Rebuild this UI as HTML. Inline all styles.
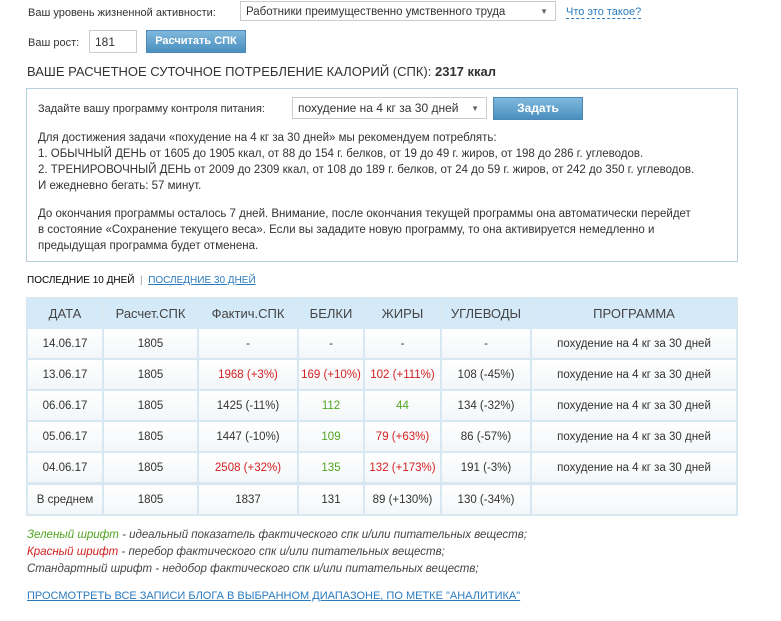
<!DOCTYPE html>
<html><head><meta charset="utf-8"><style>
body{margin:0;background:#fff;font-family:"Liberation Sans","DejaVu Sans",sans-serif;font-size:12px;color:#333;width:781px;height:621px;overflow:hidden;position:relative}
.a{position:absolute;white-space:nowrap}
.sel{position:absolute;border:1px solid #ccc;background:#fff;height:20px;line-height:20px;padding-left:5px;box-sizing:border-box}
.dd:after{content:"▼";position:absolute;right:7px;font-size:8px;color:#666}
.btn{position:absolute;background:linear-gradient(#7fb8dc,#4a8fc0);color:#fff;font-weight:bold;text-align:center;border:1px solid #4b88b5;box-sizing:border-box}
table{position:absolute;left:26px;top:297px;width:712px;border-collapse:collapse;font-size:11.5px;table-layout:fixed}
td,th{border:2px solid #d8e8f3;text-align:center;height:29px;padding:0;font-weight:normal;white-space:nowrap}
th{background:#d5eaf8;font-size:13px;color:#444;height:28px}
td{background:linear-gradient(#fff,#f3f6f8)}
.r{color:#d42020}.g{color:#4fa520}
a{color:#2b7bc0}
</style></head><body>
<div class="a" style="left:28px;top:7px;font-size:11px">Ваш уровень жизненной активности:</div>
<div class="sel dd" style="left:240px;top:1px;width:316px;font-size:11.5px">Работники преимущественно умственного труда</div>
<div class="a" style="left:566px;top:6px;color:#2b7bc0;border-bottom:1px dashed #2b7bc0;font-size:11px">Что это такое?</div>
<div class="a" style="left:28px;top:37px;font-size:11px">Ваш рост:</div>
<div class="sel" style="left:89px;top:30px;width:48px;height:23px;line-height:22px">181</div>
<div class="btn" style="left:146px;top:30px;width:100px;height:23px;line-height:21px;font-size:11px">Расчитать СПК</div>
<div class="a" style="left:27px;top:64px;font-size:13px">ВАШЕ РАСЧЕТНОЕ СУТОЧНОЕ ПОТРЕБЛЕНИЕ КАЛОРИЙ (СПК): <b>2317 ккал</b></div>
<div style="position:absolute;left:26px;top:88px;width:712px;height:174px;border:1px solid #b5cfe0;box-sizing:border-box"></div>
<div class="a" style="left:38px;top:103px;font-size:11px">Задайте вашу программу контроля питания:</div>
<div class="sel dd" style="left:292px;top:97px;width:195px;height:22px;line-height:21px">похудение на 4 кг за 30 дней</div>
<div class="btn" style="left:493px;top:97px;width:90px;height:23px;line-height:21px">Задать</div>
<div class="a" style="left:38px;top:130px;line-height:16px;font-size:11.5px">Для достижения задачи «похудение на 4 кг за 30 дней» мы рекомендуем потреблять:<br>1. ОБЫЧНЫЙ ДЕНЬ от 1605 до 1905 ккал, от 88 до 154 г. белков, от 19 до 49 г. жиров, от 198 до 286 г. углеводов.<br>2. ТРЕНИРОВОЧНЫЙ ДЕНЬ от 2009 до 2309 ккал, от 108 до 189 г. белков, от 24 до 59 г. жиров, от 242 до 350 г. углеводов.<br>И ежедневно бегать: 57 минут.</div>
<div class="a" style="left:38px;top:206px;line-height:16px;font-size:11.5px">До окончания программы осталось 7 дней. Внимание, после окончания текущей программы она автоматически перейдет<br>в состояние «Сохранение текущего веса». Если вы зададите новую программу, то она активируется немедленно и<br>предыдущая программа будет отменена.</div>
<div class="a" style="left:27px;top:275px;font-size:10px;color:#000">ПОСЛЕДНИЕ 10 ДНЕЙ <span style="color:#999">&nbsp;|&nbsp;</span> <a style="text-decoration:underline">ПОСЛЕДНИЕ 30 ДНЕЙ</a></div>
<table>
<colgroup><col style="width:76px"><col style="width:95px"><col style="width:100px"><col style="width:66px"><col style="width:77px"><col style="width:90px"><col></colgroup>
<tr><th>ДАТА</th><th>Расчет.СПК</th><th>Фактич.СПК</th><th>БЕЛКИ</th><th>ЖИРЫ</th><th>УГЛЕВОДЫ</th><th>ПРОГРАММА</th></tr>
<tr><td>14.06.17</td><td>1805</td><td>-</td><td>-</td><td>-</td><td>-</td><td>похудение на 4 кг за 30 дней</td></tr>
<tr><td>13.06.17</td><td>1805</td><td class="r">1968 (+3%)</td><td class="r">169 (+10%)</td><td class="r">102 (+111%)</td><td>108 (-45%)</td><td>похудение на 4 кг за 30 дней</td></tr>
<tr><td>06.06.17</td><td>1805</td><td>1425 (-11%)</td><td class="g">112</td><td class="g">44</td><td>134 (-32%)</td><td>похудение на 4 кг за 30 дней</td></tr>
<tr><td>05.06.17</td><td>1805</td><td>1447 (-10%)</td><td class="g">109</td><td class="r">79 (+63%)</td><td>86 (-57%)</td><td>похудение на 4 кг за 30 дней</td></tr>
<tr><td>04.06.17</td><td>1805</td><td class="r">2508 (+32%)</td><td class="g">135</td><td class="r">132 (+173%)</td><td>191 (-3%)</td><td>похудение на 4 кг за 30 дней</td></tr>
<tr><td style="border-top:3px solid #d8e8f3">В среднем</td><td style="border-top:3px solid #d8e8f3">1805</td><td style="border-top:3px solid #d8e8f3">1837</td><td style="border-top:3px solid #d8e8f3">131</td><td style="border-top:3px solid #d8e8f3">89 (+130%)</td><td style="border-top:3px solid #d8e8f3">130 (-34%)</td><td style="border-top:3px solid #d8e8f3"></td></tr>
</table>
<div class="a" style="left:27px;top:527px;line-height:17px;font-style:italic;font-size:11.5px;color:#444"><span class="g">Зеленый шрифт</span> - идеальный показатель фактического спк и/или питательных веществ;<br><span class="r">Красный шрифт</span> - перебор фактического спк и/или питательных веществ;<br>Стандартный шрифт - недобор фактического спк и/или питательных веществ;</div>
<div class="a" style="left:27px;top:590px;font-size:11px"><a style="text-decoration:underline">ПРОСМОТРЕТЬ ВСЕ ЗАПИСИ БЛОГА В ВЫБРАННОМ ДИАПАЗОНЕ, ПО МЕТКЕ "АНАЛИТИКА"</a></div>
</body></html>
